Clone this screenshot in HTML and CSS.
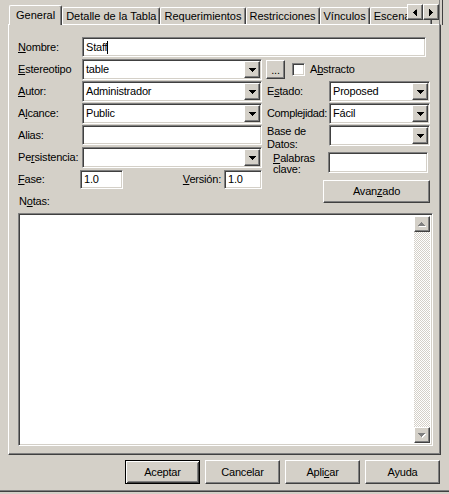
FILE: index.html
```html
<!DOCTYPE html>
<html>
<head>
<meta charset="utf-8">
<link rel="stylesheet" href="styles.css">
</head>
<body>
<div class="dialog">
  <div class="tabbar">
    <div class="tabstrip">
      <div class="tab tab-active">General</div>
      <div class="tab">Detalle de la Tabla</div>
      <div class="tab">Requerimientos</div>
      <div class="tab">Restricciones</div>
      <div class="tab">Vínculos</div>
      <div class="tab">Escenarios</div>
    </div>
    <div class="tab-scroll">
      <div class="raised tab-scroll-btn"><svg width="4" height="7" viewBox="0 0 4 7"><path d="M4 0v7h-1v-1h-1v-1h-1v-1h-1v-1h1v-1h1v-1h1z" fill="#000"/></svg></div>
      <div class="raised tab-scroll-btn"><svg width="4" height="7" viewBox="0 0 4 7"><path d="M0 0v7h1v-1h1v-1h1v-1h1v-1h-1v-1h-1v-1h-1v-1z" fill="#000"/></svg></div>
    </div>
  </div>

  <div class="panel">
    <div class="form">
      <div class="label row1"><u>N</u>ombre:</div>
      <div class="sunken field field-name"><span class="caret-text">Staff</span></div>

      <div class="label"><u>E</u>stereotipo</div>
      <div class="sunken combo">
        <div class="combo-text">table</div>
        <div class="raised combo-btn"><svg width="7" height="4" viewBox="0 0 7 4"><path d="M0 0h7v1h-1v1h-1v1h-1v1h-1v-1h-1v-1h-1v-1h-1z" fill="#000"/></svg></div>
      </div>
      <div class="stereo-extra">
        <div class="raised dots-btn">...</div>
        <div class="sunken checkbox"></div>
        <div class="check-label">A<u>b</u>stracto</div>
      </div>

      <div class="label"><u>A</u>utor:</div>
      <div class="sunken combo">
        <div class="combo-text">Administrador</div>
        <div class="raised combo-btn"><svg width="7" height="4" viewBox="0 0 7 4"><path d="M0 0h7v1h-1v1h-1v1h-1v1h-1v-1h-1v-1h-1v-1h-1z" fill="#000"/></svg></div>
      </div>
      <div class="label label-right">E<u>s</u>tado:</div>
      <div class="sunken combo">
        <div class="combo-text">Proposed</div>
        <div class="raised combo-btn"><svg width="7" height="4" viewBox="0 0 7 4"><path d="M0 0h7v1h-1v1h-1v1h-1v1h-1v-1h-1v-1h-1v-1h-1z" fill="#000"/></svg></div>
      </div>

      <div class="label">A<u>l</u>cance:</div>
      <div class="sunken combo">
        <div class="combo-text">Public</div>
        <div class="raised combo-btn"><svg width="7" height="4" viewBox="0 0 7 4"><path d="M0 0h7v1h-1v1h-1v1h-1v1h-1v-1h-1v-1h-1v-1h-1z" fill="#000"/></svg></div>
      </div>
      <div class="label label-right label-tight">Complejidad:</div>
      <div class="sunken combo">
        <div class="combo-text">Fácil</div>
        <div class="raised combo-btn"><svg width="7" height="4" viewBox="0 0 7 4"><path d="M0 0h7v1h-1v1h-1v1h-1v1h-1v-1h-1v-1h-1v-1h-1z" fill="#000"/></svg></div>
      </div>

      <div class="label">Alias:</div>
      <div class="sunken field"></div>
      <div class="label label-right label-multi">Base de<br>Datos:</div>
      <div class="sunken combo">
        <div class="combo-text"></div>
        <div class="raised combo-btn"><svg width="7" height="4" viewBox="0 0 7 4"><path d="M0 0h7v1h-1v1h-1v1h-1v1h-1v-1h-1v-1h-1v-1h-1z" fill="#000"/></svg></div>
      </div>

      <div class="label">Pe<u>r</u>sistencia:</div>
      <div class="sunken combo">
        <div class="combo-text"></div>
        <div class="raised combo-btn"><svg width="7" height="4" viewBox="0 0 7 4"><path d="M0 0h7v1h-1v1h-1v1h-1v1h-1v-1h-1v-1h-1v-1h-1z" fill="#000"/></svg></div>
      </div>
      <div class="label label-keywords"><u>P</u>alabras<br>clave:</div>
      <div class="sunken field field-keywords"></div>

      <div class="label"><u>F</u>ase:</div>
      <div class="phase-row">
        <div class="sunken field field-phase">1.0</div>
        <div class="version">
          <div class="label"><u>V</u>ersión:</div>
          <div class="sunken field field-version">1.0</div>
        </div>
      </div>
      <div class="raised btn btn-advanced">Avan<u>z</u>ado</div>
    </div>

    <div class="notes-label">N<u>o</u>tas:</div>
    <div class="sunken notes">
      <div class="scrollbar">
        <div class="raised scroll-btn"><svg width="8" height="5" viewBox="0 0 8 5"><path d="M4 1h1v1h1v1h1v1h1v1h-7v-1h1v-1h1v-1h1z" fill="#fff"/><path d="M3 0h1v1h1v1h1v1h1v1h-7v-1h1v-1h1v-1h1z" fill="#808080"/></svg></div>
        <div class="scroll-track"></div>
        <div class="raised scroll-btn"><svg width="8" height="5" viewBox="0 0 8 5"><path d="M1 1h7v1h-1v1h-1v1h-1v1h-1v-1h-1v-1h-1v-1h-1z" fill="#fff"/><path d="M0 0h7v1h-1v1h-1v1h-1v1h-1v-1h-1v-1h-1v-1h-1z" fill="#808080"/></svg></div>
      </div>
    </div>
  </div>

  <div class="buttons">
    <div class="btn btn-default">Aceptar</div>
    <div class="raised btn">Cancelar</div>
    <div class="raised btn">Apli<u>c</u>ar</div>
    <div class="raised btn">Ayuda</div>
  </div>
  <div class="frame-bottom"></div>
</div>
</body>
</html>
```
FILE: styles.css
```css
* { box-sizing: border-box; }
html, body { margin: 0; padding: 0; }
body {
  width: 449px;
  height: 494px;
  overflow: hidden;
  background: #d4d0c8;
  font-family: "Liberation Sans", Arial, sans-serif;
  font-size: 11px;
  line-height: 13px;
  letter-spacing: -0.2px;
  color: #000;
}
u { text-decoration: underline; text-underline-offset: 1px; }

.dialog { display: flex; flex-direction: column; height: 494px; }

/* shared 3D styles */
.raised {
  background: #d4d0c8;
  border: 1px solid;
  border-color: #fff #404040 #404040 #fff;
  box-shadow: inset -1px -1px #808080, inset 1px 1px #d4d0c8;
}
.sunken {
  background: #fff;
  border: 1px solid;
  border-color: #808080 #fff #fff #808080;
  box-shadow: inset 1px 1px #404040, inset -1px -1px #d4d0c8;
}

/* tabs */
.tabbar { position: relative; height: 24px; z-index: 1; flex: none; }
.tabbar::after {
  content: "";
  position: absolute;
  left: 439px;
  top: 0;
  width: 2px;
  height: 25px;
  border-left: 1px solid #808080;
  border-right: 1px solid #404040;
}
.tabstrip {
  display: flex;
  align-items: flex-end;
  height: 25px;
  width: 439px;
  padding-left: 9px;
  overflow: hidden;
  letter-spacing: 0;
}
.tab {
  flex: none;
  height: 17px;
  margin-bottom: 1px;
  padding: 0 3px;
  display: flex;
  align-items: center;
  white-space: nowrap;
  background: #d4d0c8;
  border-left: 1px solid #fff;
  border-top: 1px solid #fff;
  border-right: 1px solid #404040;
  box-shadow: inset -1px 0 #808080;
  border-top-left-radius: 2px;
  border-top-right-radius: 2px;
}
.tab-active {
  height: 20px;
  margin-bottom: 0;
  padding: 3px 6px 0;
  align-items: flex-start;
}
.tab-scroll {
  position: absolute;
  left: 407px;
  top: 4px;
  display: flex;
}
.tab-scroll-btn {
  width: 16px;
  height: 16px;
  display: flex;
  align-items: center;
  justify-content: center;
}
.tab-scroll-btn svg { display: block; }

/* panel */
.panel {
  flex: none;
  width: 433px;
  height: 431px;
  margin-left: 8px;
  border: 1px solid;
  border-color: #fff #404040 #404040 #fff;
  box-shadow: inset -1px -1px #808080;
  padding: 12px 0 0 9px;
}

.form {
  display: grid;
  grid-template-columns: 64px 180px 67px 101px;
  grid-template-rows: repeat(7, 20px);
  row-gap: 2px;
}
.label { align-self: center; white-space: nowrap; }
.label-right { padding-left: 5px; }
.label-tight { letter-spacing: -0.35px; }
.label-multi { align-self: start; }
.label-keywords { align-self: start; padding-left: 11px; margin-top: 6px; line-height: 11px; }

.field {
  height: 20px;
  padding: 1px 3px;
  display: flex;
  align-items: center;
  white-space: nowrap;
}
.field-name { grid-column: 2 / 5; width: 344px; }
.caret-text { border-right: 1px solid #000; padding-right: 0; line-height: 13px; }
.field-keywords { align-self: start; margin-top: 5px; margin-left: -1px; width: 100px; height: 21px; }

.combo {
  height: 21px;
  padding: 1px;
  display: flex;
  align-self: start;
}
.combo-text {
  flex: 1;
  padding-left: 2px;
  display: flex;
  align-items: center;
  white-space: nowrap;
}
.combo-btn {
  width: 16px;
  flex: none;
  display: flex;
  align-items: center;
  justify-content: center;
}
.combo-btn svg { display: block; margin-top: 1px; }

.stereo-extra {
  grid-column: 3 / 5;
  display: flex;
  align-items: center;
}
.dots-btn {
  width: 19px;
  height: 19px;
  margin-left: 4px;
  display: flex;
  align-items: flex-end;
  justify-content: center;
  padding-bottom: 3px;
  line-height: 9px;
}
.checkbox { width: 13px; height: 13px; margin-left: 7px; }
.check-label { margin-left: 5px; }

.phase-row { display: flex; align-items: flex-start; }
.field-phase { width: 43px; height: 19px; margin-left: -2px; margin-top: 1px; }
.version { margin-left: auto; display: flex; align-items: center; margin-top: 1px; }
.version .label { margin-right: 3px; }
.field-version { width: 38px; height: 19px; }

.btn {
  width: 75px;
  height: 24px;
  display: flex;
  align-items: center;
  justify-content: center;
}
.btn-advanced {
  grid-column: 3 / 5;
  grid-row: 7;
  justify-self: end;
  align-self: start;
  width: 107px;
  height: 23px;
  margin-top: 11px;
}

.notes-label { margin-top: 6px; padding-left: 1px; }
.notes {
  margin-top: 5px;
  width: 415px;
  height: 233px;
  padding: 2px;
  display: flex;
  justify-content: flex-end;
}
.scrollbar { width: 16px; display: flex; flex-direction: column; }
.scroll-btn {
  width: 16px;
  height: 16px;
  flex: none;
  display: flex;
  align-items: center;
  justify-content: center;
}
.scroll-btn svg { display: block; }
.scroll-track {
  flex: 1;
  background: repeating-conic-gradient(#fff 0 25%, #d4d0c8 0 50%) 0 0 / 2px 2px;
}

/* bottom buttons */
.buttons {
  flex: none;
  margin-top: 5px;
  padding-right: 9px;
  display: flex;
  justify-content: flex-end;
  gap: 5px;
}
.btn-default {
  background: #d4d0c8;
  border: 1px solid #000;
  box-shadow: inset 1px 1px #fff, inset -1px -1px #404040, inset 2px 2px #d4d0c8, inset -2px -2px #808080;
}
.frame-bottom {
  margin-top: auto;
  margin-bottom: 2px;
  height: 2px;
  border-top: 1px solid #808080;
  border-bottom: 1px solid #404040;
}
```
